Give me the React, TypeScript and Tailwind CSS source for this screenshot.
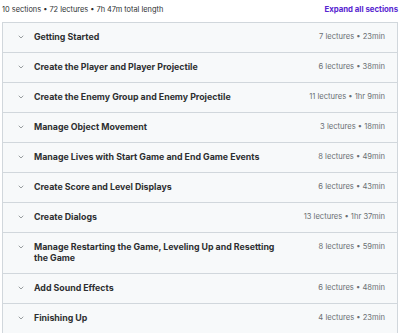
import { ChevronDown } from 'lucide-react'

interface Section {
    title: string
    meta: string
}

const sections: Section[] = [
    { title: 'Getting Started', meta: '7 lectures • 23min' },
    { title: 'Create the Player and Player Projectile', meta: '6 lectures • 38min' },
    { title: 'Create the Enemy Group and Enemy Projectile', meta: '11 lectures • 1hr 9min' },
    { title: 'Manage Object Movement', meta: '3 lectures • 18min' },
    { title: 'Manage Lives with Start Game and End Game Events', meta: '8 lectures • 49min' },
    { title: 'Create Score and Level Displays', meta: '6 lectures • 43min' },
    { title: 'Create Dialogs', meta: '13 lectures • 1hr 37min' },
    { title: 'Manage Restarting the Game, Leveling Up and Resetting the Game', meta: '8 lectures • 59min' },
    { title: 'Add Sound Effects', meta: '6 lectures • 48min' },
    { title: 'Finishing Up', meta: '4 lectures • 23min' },
]

export default function App() {
    return (
        <div className="w-[400px] h-[333px] bg-white overflow-hidden px-[2px] font-['Inter',sans-serif] text-[#2d2f31]">
            <div className="flex items-center justify-between h-[22px] pb-[2px]">
                <span className="text-[7.4px] text-[#2d2f31]">10 sections • 72 lectures • 7h 47m total length</span>
                <span className="text-[7.8px] font-bold text-[#5624d0]">Expand all sections</span>
            </div>

            <div className="border border-[#d1d7dc]">
                {sections.map((s, i) => (
                    <div
                        key={i}
                        className="flex items-start gap-[9px] bg-[#f7f9fa] border-b border-[#d1d7dc] last:border-b-0 pl-[14px] pr-[12px] pt-[8px] pb-[10px]"
                    >
                        <ChevronDown className="w-[8px] h-[8px] mt-[2px] text-[#6a6f73] shrink-0" strokeWidth={2} />
                        <div className="flex-1 pr-[22px] text-[8.8px] font-bold leading-[11px]">{s.title}</div>
                        <div className="text-[7.6px] text-[#6a6f73] leading-[11px] whitespace-nowrap">{s.meta}</div>
                    </div>
                ))}
            </div>
        </div>
    )
}
